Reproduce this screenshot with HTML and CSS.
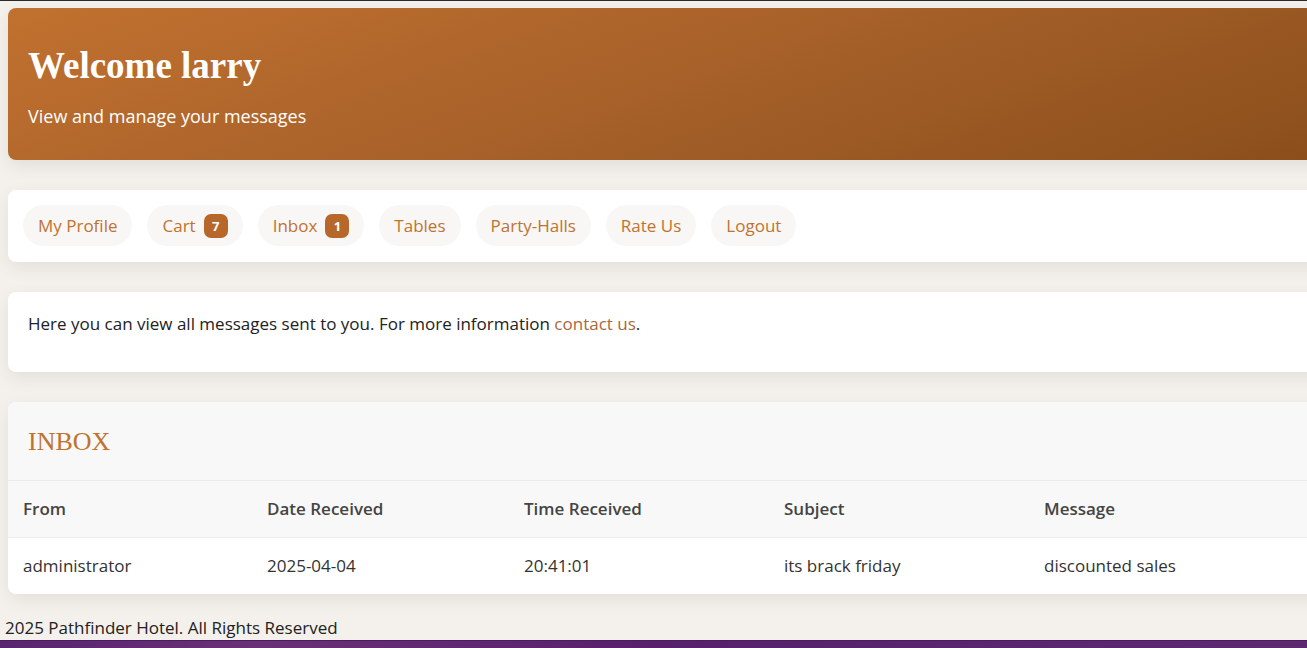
FILE: index.html
```html
<!DOCTYPE html>
<html lang="en">
<head>
<meta charset="utf-8">
<title>Inbox - Pathfinder Hotel</title>
<link rel="stylesheet" href="styles.css">
</head>
<body>
<div class="topline"></div>
<main class="page">
  <header class="hero">
    <h1 class="hero-title">Welcome larry</h1>
    <p class="hero-sub">View and manage your messages</p>
  </header>

  <nav class="card nav">
    <a class="pill" href="#">My Profile</a>
    <a class="pill" href="#">Cart <span class="badge">7</span></a>
    <a class="pill" href="#">Inbox <span class="badge">1</span></a>
    <a class="pill" href="#">Tables</a>
    <a class="pill" href="#">Party-Halls</a>
    <a class="pill" href="#">Rate Us</a>
    <a class="pill" href="#">Logout</a>
  </nav>

  <section class="card info">
    <p>Here you can view all messages sent to you. For more information <a class="link" href="#">contact us</a>.</p>
  </section>

  <section class="card inbox">
    <div class="inbox-head"><h2 class="inbox-title">INBOX</h2></div>
    <table class="table">
      <colgroup>
        <col class="c1"><col class="c2"><col class="c3"><col class="c4"><col class="c5">
      </colgroup>
      <thead>
        <tr><th>From</th><th>Date Received</th><th>Time Received</th><th>Subject</th><th>Message</th></tr>
      </thead>
      <tbody>
        <tr><td>administrator</td><td>2025-04-04</td><td>20:41:01</td><td>its brack friday</td><td>discounted sales</td></tr>
      </tbody>
    </table>
  </section>
</main>
<footer class="footer">
  <p class="copy">2025 Pathfinder Hotel. All Rights Reserved</p>
  <div class="band"></div>
</footer>
</body>
</html>
```

FILE: styles.css
```css
html, body {
  margin: 0;
  padding: 0;
  overflow: hidden;
}
body {
  background: #f4f1ec;
  font-family: "Open Sans", "DejaVu Sans", sans-serif;
  color: #333;
  width: 1307px;
  height: 648px;
}
.topline {
  height: 1px;
  background: #2a2a2a;
}
.page {
  width: 1340px;
  padding: 7px 8px 0 8px;
  display: flex;
  flex-direction: column;
  gap: 30px;
}
.hero {
  height: 152px;
  box-sizing: border-box;
  padding: 36px 20px 0 20px;
  border-radius: 8px;
  background: linear-gradient(160deg, #c1712f 0%, #a9622a 45%, #8a4e1b 100%);
  color: #fff;
  box-shadow: 0 6px 18px rgba(0,0,0,0.08);
}
.hero-title {
  margin: 0;
  font-family: "Liberation Serif", "DejaVu Serif", serif;
  font-weight: 700;
  font-size: 37px;
  line-height: 44px;
}
.hero-sub {
  margin: 16px 0 0 0;
  font-size: 18px;
  line-height: 24px;
}
.card {
  background: #fff;
  border-radius: 8px;
  box-shadow: 0 6px 18px rgba(0,0,0,0.07);
}
.nav {
  display: flex;
  gap: 15px;
  padding: 15px 15px 16px 15px;
}
.pill {
  display: flex;
  align-items: center;
  gap: 8px;
  height: 41px;
  box-sizing: border-box;
  padding: 0 15px;
  border-radius: 21px;
  background: #f8f7f6;
  color: #c0732f;
  text-decoration: none;
  font-size: 17px;
}
.badge {
  display: inline-flex;
  align-items: center;
  justify-content: center;
  width: 24px;
  height: 24px;
  border-radius: 7px;
  background: #b8672b;
  color: #fff;
  font-size: 13px;
  font-weight: 700;
}
.info {
  padding: 20px 20px 36px 20px;
}
.info p {
  margin: 0;
  font-size: 17px;
  line-height: 24px;
  color: #222;
}
.link {
  color: #a9683a;
  text-decoration: none;
}
.inbox {
  overflow: hidden;
}
.inbox-head {
  background: #f8f8f8;
  padding: 21px 20px 19px 20px;
  border-bottom: 1px solid #ececec;
}
.inbox-title {
  margin: 0;
  font-family: "Liberation Serif", "DejaVu Serif", serif;
  font-weight: 400;
  font-size: 26px;
  line-height: 38px;
  color: #c0732f;
}
.table {
  width: 100%;
  border-collapse: collapse;
  table-layout: fixed;
}
.c1 { width: 244px; }
.c2 { width: 257px; }
.c3 { width: 260px; }
.c4 { width: 260px; }
.table th, .table td {
  text-align: left;
  padding: 16px 15px;
  font-size: 17px;
  line-height: 24px;
}
.table th {
  background: #f8f8f8;
  color: #444;
  font-weight: 600;
  border-bottom: 1px solid #ececec;
}
.table td {
  color: #333;
}
.footer {
  margin-top: 21px;
}
.copy {
  margin: 0;
  padding: 0 5px;
  font-size: 17px;
  line-height: 25px;
  color: #222;
}
.band {
  height: 7px;
  border-top: 1px solid #4a1d5c;
  background: linear-gradient(90deg, #5a2470 0%, #6a2f78 20%, #571f6c 50%, #5d2a72 100%);
}
```
